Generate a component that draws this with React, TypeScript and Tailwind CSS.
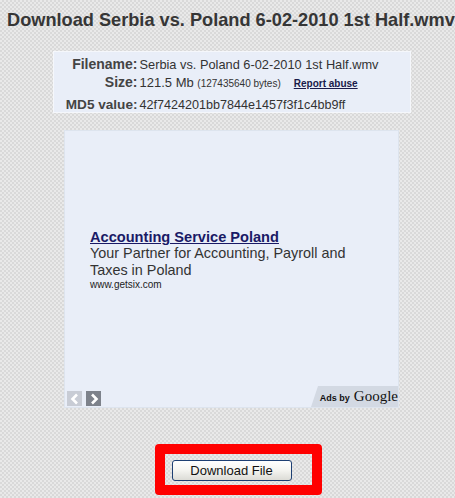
import React from "react";

function Chevron({ dir }: { dir: "left" | "right" }) {
  return (
    <svg width="10" height="12" viewBox="0 0 10 12">
      {dir === "left" ? (
        <path d="M7 1.5 L2.5 6 L7 10.5" stroke="#ffffff" strokeWidth="2.6" fill="none" />
      ) : (
        <path d="M3 1.5 L7.5 6 L3 10.5" stroke="#ffffff" strokeWidth="2.6" fill="none" />
      )}
    </svg>
  );
}

export default function App() {
  return (
    <div className="w-[455px] h-[498px] overflow-hidden bg-[image:repeating-conic-gradient(#d9d9d9_0%_25%,#e9e9e9_0%_50%)] bg-[length:4px_4px] font-['Liberation_Sans',Arial,sans-serif]">
      <div className="w-[463px] flex flex-col items-center">
        <h1 className="self-start pl-[7px] pt-[10px] whitespace-nowrap text-[18.2px] leading-[21px] font-bold text-[#363636]">
          Download Serbia vs. Poland 6-02-2010 1st Half.wmv
        </h1>

        <div className="mt-[20px] w-[358px] h-[62px] bg-[#e9eef8] border border-[#f5f7fb] text-[13px] leading-[16px] text-[#333]">
          <div className="flex mt-[4px] items-baseline">
            <div className="w-[84px] text-right font-bold text-[14px] text-[#444]">Filename:</div>
            <div className="pl-[2px] whitespace-nowrap text-[12.8px]">Serbia vs. Poland 6-02-2010 1st Half.wmv</div>
          </div>
          <div className="flex mt-[1px] items-baseline">
            <div className="w-[84px] text-right font-bold text-[14px] text-[#444]">Size:</div>
            <div className="pl-[2px] whitespace-nowrap">
              121.5 Mb <span className="text-[10px]">(127435640 bytes)</span>
            </div>
            <a className="ml-[13px] text-[10px] font-bold underline text-[#1a1a4a]">Report abuse</a>
          </div>
          <div className="flex mt-[5px] items-baseline">
            <div className="w-[84px] text-right font-bold text-[13.6px] text-[#444]">MD5 value:</div>
            <div className="pl-[2px] whitespace-nowrap text-[12.6px]">42f7424201bb7844e1457f3f1c4bb9ff</div>
          </div>
        </div>

        <div className="mt-[17px] w-[335px] h-[278px] bg-[#e9eef8] border border-[#dde4ee] flex flex-col">
          <div className="pl-[25px] pt-[98px]">
            <a className="block text-[14.6px] leading-[16px] font-bold underline text-[#1a1a66]">
              Accounting Service Poland
            </a>
            <div className="text-[14.4px] leading-[17px] text-[#333] w-[275px]">
              Your Partner for Accounting, Payroll and Taxes in Poland
            </div>
            <div className="text-[10px] leading-[11px] text-[#222]">www.getsix.com</div>
          </div>
          <div className="flex-1" />
          <div className="flex items-end justify-between">
            <div className="flex gap-[4px] pl-[2px] pb-[1px]">
              <div className="w-[15px] h-[15px] bg-[#c8ccd5] flex items-center justify-center">
                <Chevron dir="left" />
              </div>
              <div className="w-[15px] h-[15px] bg-[#7d828b] flex items-center justify-center">
                <Chevron dir="right" />
              </div>
            </div>
            <div className="h-[21px] w-[87px] bg-[#d3d9e3] [clip-path:polygon(7px_0,100%_0,100%_100%,0_100%)] flex items-baseline justify-end pt-[2px] pr-0 gap-[4px] whitespace-nowrap">
              <span className="text-[9px] leading-[12px] font-bold text-[#111]">Ads by</span>
              <span className="text-[15px] leading-[16px] font-['Liberation_Serif',serif] text-[#111]">Google</span>
            </div>
          </div>
        </div>

        <div className="mt-[36px] ml-[13px] w-[167px] h-[51px] border-[10px] border-[#ff0000] rounded-[4px] pt-[4px] pl-[7px]">
          <button className="w-[120px] h-[21px] rounded-[3px] border border-[#1d3f73] bg-gradient-to-b from-[#ffffff] via-[#f4f4f0] to-[#dcdcd6] text-[13px] leading-[17px] text-[#111]">
            Download File
          </button>
        </div>
      </div>
    </div>
  );
}
